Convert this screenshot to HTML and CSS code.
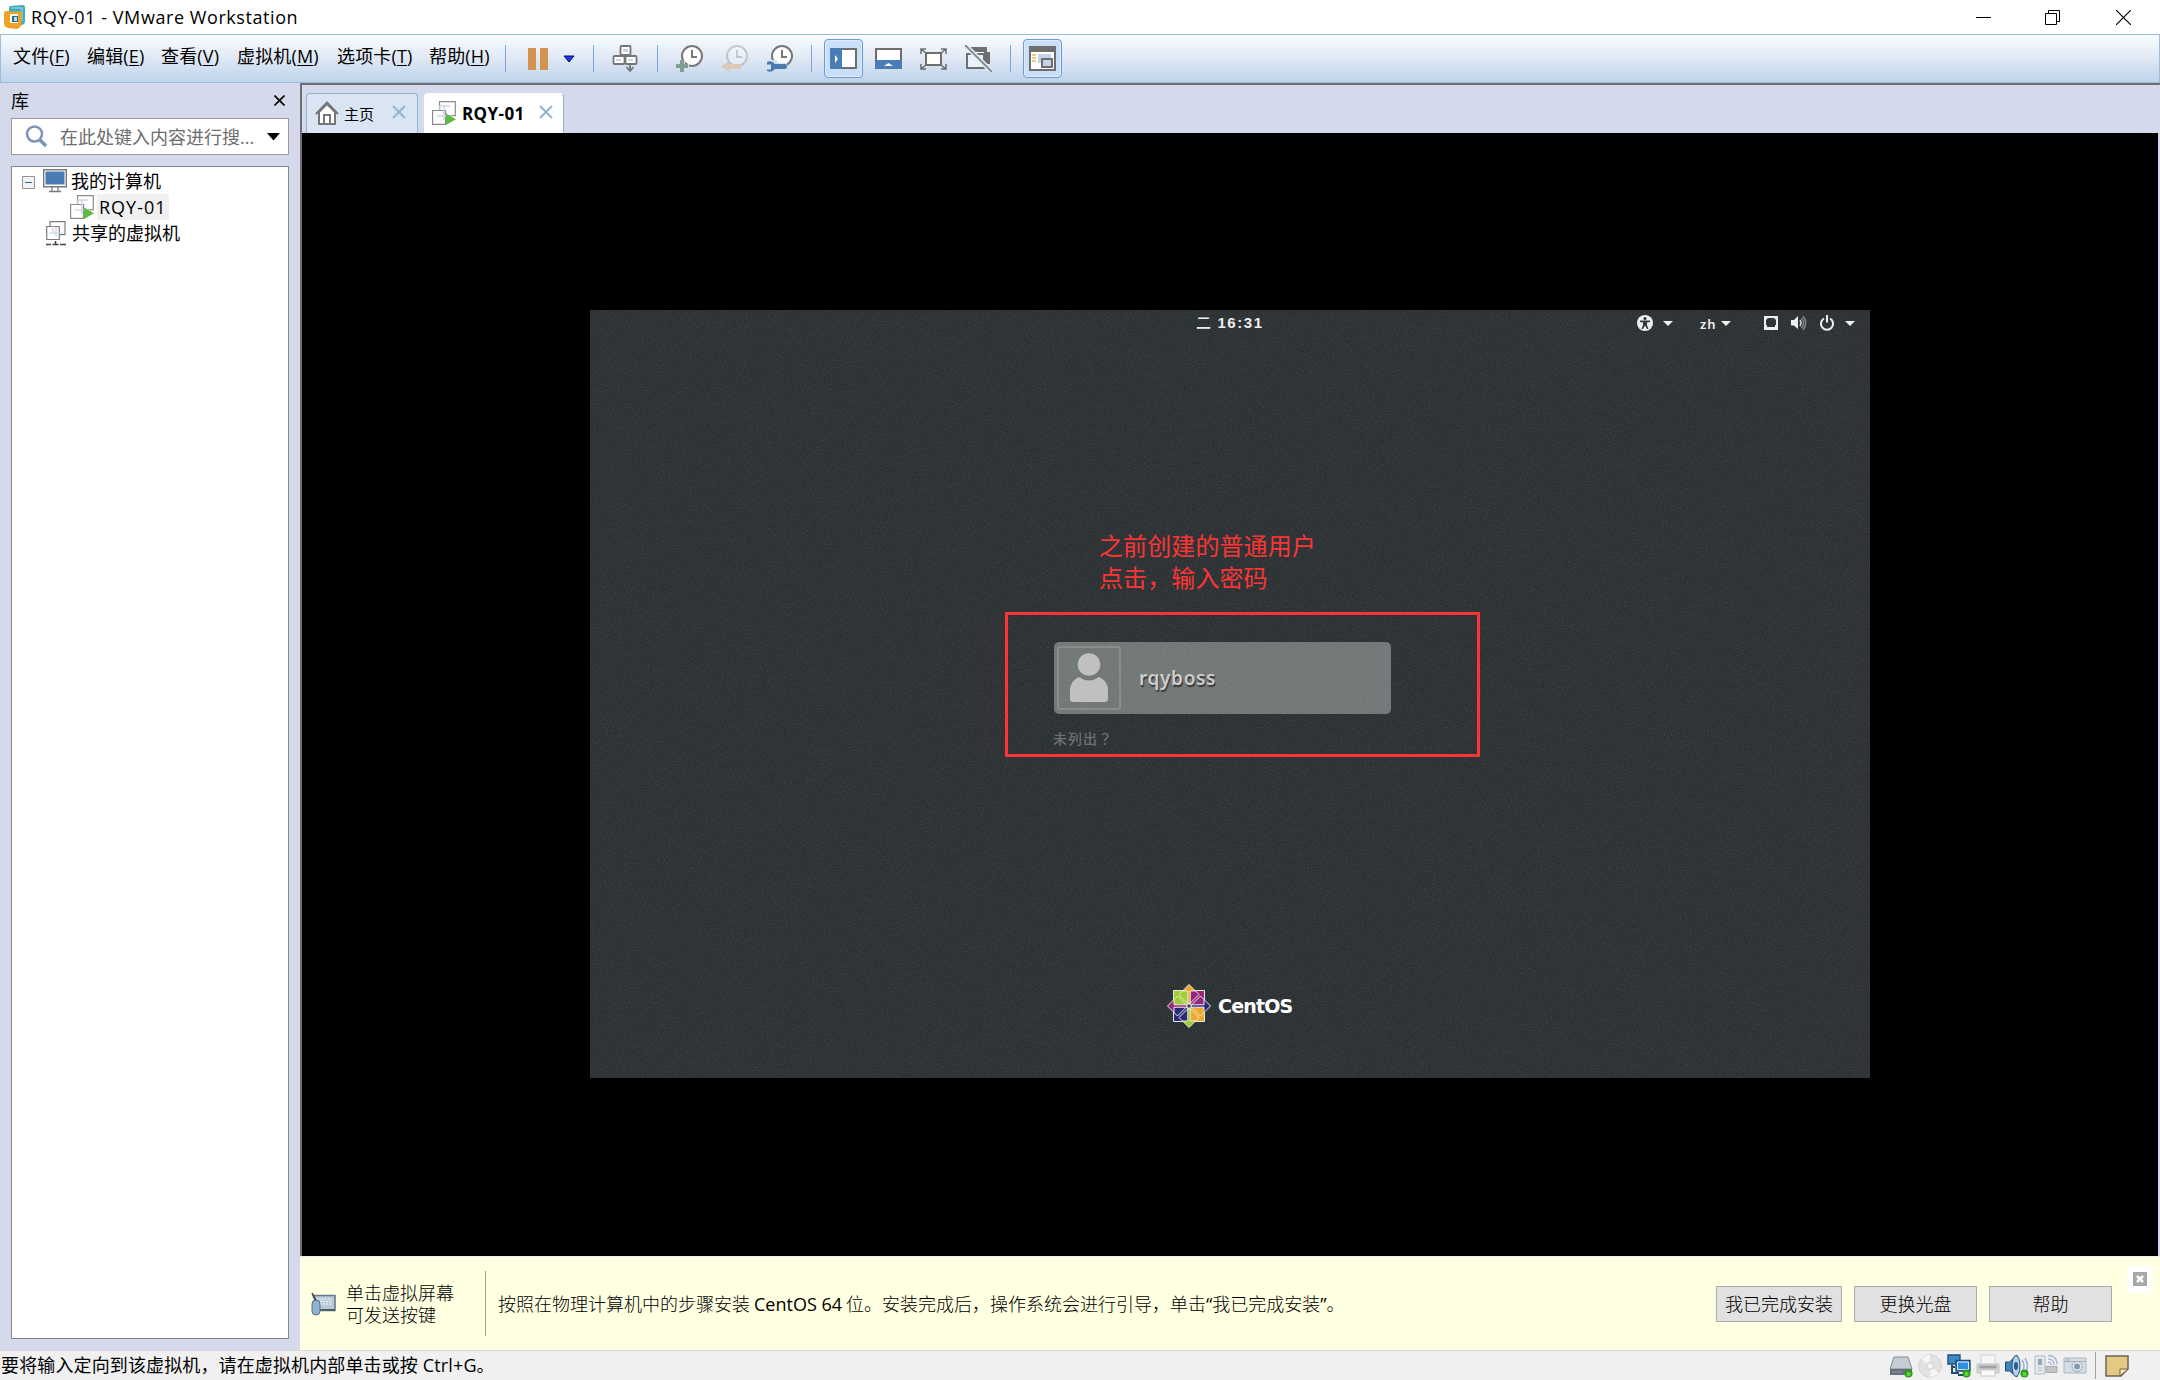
FILE: index.html
```html
<!DOCTYPE html>
<html lang="zh-CN">

<head>
    <meta charset="UTF-8">
    <meta name="viewport" content="width=device-width, initial-scale=1.0">
    <title>RQY-01 - VMware Workstation</title>
    <link rel="stylesheet" href="styles.css">
</head>

<body>
    <!-- 共用圖示 -->
    <svg class="defs" width="0" height="0">
        <defs>
            <symbol id="vm-on" viewBox="0 0 24 24">
                <path d="M7.500.6h15.800v14H7.500z" fill="#fff" stroke="#8c8c8c" stroke-width="1.200" />
                <path d="M.6 9.500h13v13.800H.6z" fill="#fff" stroke="#8c8c8c" stroke-width="1.200" />
                <path d="M12 5v14M5 15h15M8 9V5h10" fill="none" stroke="#cdd7e8" stroke-width="1.500" />
                <path d="M14 12.500l10 5.700-10 5.800z" fill="#5dbb3f" />
            </symbol>
            <symbol id="clock" viewBox="0 0 27 27">
                <circle cx="16" cy="11" r="10" fill="#fff" stroke="#777" stroke-width="2" />
                <path d="M16 5v7h5" fill="none" stroke="#777" stroke-width="2" />
            </symbol>
            <symbol id="cross" viewBox="0 0 14 14">
                <path d="M1 1l12 12M13 1L1 13" fill="none" stroke="currentColor" stroke-width="2" />
            </symbol>
            <symbol id="dot" viewBox="0 0 10 10">
                <circle cx="5" cy="5" r="4.500" fill="#2e9a1c" />
                <circle cx="5" cy="5.500" r="2.500" fill="#5fd03c" />
            </symbol>
        </defs>
    </svg>

    <header class="titlebar">
        <svg class="app-icon" width="22" height="25" viewBox="0 0 22 25">
            <path d="M6 1l13-1q2 0 2 3v13q0 3-3 4l-4 1-9-4V3q0-2 1-2z" fill="#43a9bf" />
            <path d="M7 3h11v13" fill="none" stroke="#7fd0dc" stroke-width="1.500" />
            <path d="M3 6h2v12l9 1V9h3v10q0 4-4 5l-9-1q-4-1-4-5V8q0-2 3-2z" fill="#f0a224" />
            <path d="M5 8h11v11H5z" fill="none" stroke="#f0a224" stroke-width="3" />
            <path d="M6 9h8v9H6z" fill="#f7fafc" />
            <path d="M8 11h6v6H8z" fill="#1f6e8b" />
            <path d="M10 12h3v4h-3z" fill="#c9dde6" />
        </svg>
        <span class="app-title">RQY-01 - VMware Workstation</span>
        <div class="win-btns">
            <svg width="15" height="15"><path d="M0 7.500h15" stroke="#000" /></svg>
            <svg width="15" height="15" fill="none" stroke="#000"><path d="M.5 3.500h11v11H.5zM3.500 3.500v-3h11v11h-3" /></svg>
            <svg width="15" height="15"><path d="M0 0l15 15M15 0L0 15" stroke="#000" stroke-width="1.200" /></svg>
        </div>
    </header>

    <nav class="toolbar">
        <div class="menu">
            <span class="m-2">文件(<u>F</u>)</span>
            <span class="m-2">编辑(<u>E</u>)</span>
            <span class="m-v">查看(<u>V</u>)</span>
            <span class="m-3">虚拟机(<u>M</u>)</span>
            <span class="m-t">选项卡(<u>T</u>)</span>
            <span class="m-h">帮助(<u>H</u>)</span>
        </div>
        <i class="sep"></i>
        <div class="tools tight">
            <span class="tool"><svg width="20" height="22"><path d="M0 0h8v22H0zM12 0h8v22h-8z" fill="#d3924d" /></svg></span>
            <span class="drop"><svg width="12" height="8"><path d="M1 1h10L6 7z" fill="#1b35ff" stroke="#000c66" /></svg></span>
        </div>
        <i class="sep"></i>
        <span class="tool">
            <svg width="27" height="27" viewBox="0 0 27 27" fill="#fff" stroke="#777" stroke-width="1.800">
                <rect x="8.500" y="1" width="10" height="9" rx="1" />
                <rect x="1.500" y="11" width="11" height="8" rx="1" />
                <rect x="13.500" y="11" width="11" height="8" rx="1" />
                <path d="M11 4h5v3h-5zM4 14h5v2H4zM16 14h5v2h-5z" fill="#c8d5e8" stroke="none" />
                <path d="M18 18v7M14.500 22l3.500 4 3.500-4" fill="none" />
            </svg>
        </span>
        <i class="sep"></i>
        <div class="tools">
            <span class="tool">
                <svg width="27" height="27" viewBox="0 0 27 27">
                    <use href="#clock" />
                    <path d="M0 19h4v-4h5v4h4v5H0z" fill="#d9e4f1" />
                    <path d="M6 15v12M0 21h12" stroke="#7f9f91" stroke-width="4" />
                </svg>
            </span>
            <span class="tool">
                <svg width="27" height="27" viewBox="0 0 27 27">
                    <use href="#clock" opacity=".3" />
                    <path d="M0 21.500l8-5.500v3h12v5H8v3z" fill="#dec9b9" />
                </svg>
            </span>
            <span class="tool">
                <svg width="27" height="27" viewBox="0 0 27 27">
                    <use href="#clock" />
                    <path d="M1 15h9l3 3h8v7H10l-9 2z" fill="#d3e0ef" />
                    <path d="M1 17q5-2 8 2h11q2 2.500 0 5H9q-3 4-8 2v-1.500h4v-5H1z" fill="#4a7aae" />
                </svg>
            </span>
        </div>
        <i class="sep"></i>
        <div class="tools">
            <span class="tool active">
                <svg width="27" height="21">
                    <path d="M0 0h27v21H0z" fill="#4a7db5" />
                    <path d="M12 1h14v19H12z" fill="#fff" />
                    <path d="M12 1h14v19H12" fill="none" stroke="#6e6e6e" stroke-width="2" />
                    <path d="M5 7l3 4-3 4z" fill="#fff" />
                </svg>
            </span>
            <span class="tool">
                <svg width="27" height="21">
                    <path d="M1 1h25v12H1z" fill="#fff" stroke="#6e6e6e" stroke-width="2" />
                    <path d="M0 12h27v9H0z" fill="#4a7db5" />
                    <path d="M9 18l4.500-3 4.500 3z" fill="#fff" />
                </svg>
            </span>
            <span class="tool">
                <svg width="27" height="22" fill="none" stroke="#6e6e6e" stroke-width="2">
                    <path d="M6 5h15v12H6z" fill="#fff" />
                    <path d="M1 6V1h5M21 1h5v5M26 16v5h-5M6 21H1v-5M1 1l5 4M26 1l-5 4M1 21l5-4M26 21l-5-4" stroke-width="1.500" />
                </svg>
            </span>
            <span class="tool">
                <svg width="27" height="27">
                    <path d="M6 7V3h15v13h-3" fill="#fff" stroke="#6e6e6e" stroke-width="2" />
                    <path d="M6 2h16v5H6zM19 7h6v12h-6z" fill="#6e6e6e" />
                    <path d="M2 9h17v14H2z" fill="#e9f0f8" stroke="#6e6e6e" stroke-width="2" />
                    <path d="M0 0l27 27" stroke="#e2ebf5" stroke-width="5" />
                    <path d="M0 0l27 27" stroke="#7d868f" stroke-width="1.800" />
                </svg>
            </span>
        </div>
        <i class="sep"></i>
        <span class="tool active">
            <svg width="27" height="25">
                <path d="M1 1h25v23H1z" fill="#fff" stroke="#6e6e6e" stroke-width="2" />
                <path d="M1 1h25v5H1z" fill="#6e6e6e" />
                <path d="M3 9h4M3 12h4M3 15h4" stroke="#e3b955" stroke-width="1.500" />
                <path d="M9 8h13v9H9z" fill="#c5d3e6" />
                <path d="M13 13h10v8H13z" fill="#c5d3e6" stroke="#6e6e6e" stroke-width="2" />
            </svg>
        </span>
    </nav>

    <div class="workspace">
        <aside class="library">
            <div class="lib-head">
                <span>库</span>
                <svg width="11" height="11"><path d="M.5.5l10 10M10.500.5l-10 10" stroke="#000" stroke-width="1.600" /></svg>
            </div>
            <div class="search">
                <svg width="24" height="24" fill="none" stroke="#7d94ba">
                    <circle cx="9.500" cy="9" r="7.500" stroke-width="2.500" />
                    <path d="M15 15l6 6" stroke-width="3.500" />
                </svg>
                <span class="placeholder">在此处键入内容进行搜...</span>
                <svg width="13" height="8"><path d="M0 0h13L6.500 7.500z" /></svg>
            </div>
            <div class="tree">
                <div class="node root">
                    <svg class="fold" width="13" height="13">
                        <path d="M.5.5h12v12H.5z" fill="#f4f4f4" stroke="#919191" />
                        <path d="M3 6.500h7" stroke="#3b5bab" />
                    </svg>
                    <svg width="24" height="24">
                        <path d="M.7.700h22.600v17H.7z" fill="#fff" stroke="#7a7a7a" stroke-width="1.400" />
                        <path d="M2.500 2.500h19v13h-19z" fill="#4a7bb2" />
                        <path d="M9 18v4M15 18v4M6 22.500h12" stroke="#7a7a7a" stroke-width="1.300" />
                    </svg>
                    <span class="label">我的计算机</span>
                </div>
                <div class="node child">
                    <svg width="24" height="24"><use href="#vm-on" /></svg>
                    <span class="selected">RQY-01</span>
                </div>
                <div class="node shared">
                    <svg width="20" height="25" fill="none" stroke="#7d7d7d" stroke-width="1.200">
                        <path d="M4 .7h15v13H4z" fill="#fff" />
                        <path d="M.7 5.500h12.600v13H.7z" fill="#fff" />
                        <path d="M7 5v7h10M10 6v10M3 12h10" stroke="#c7d3e6" />
                        <path d="M9.500 20v4M0 23.500h5M6.500 23.500h6M14 23.500h6" stroke="#444" stroke-width="1.600" />
                    </svg>
                    <span class="label">共享的虚拟机</span>
                </div>
            </div>
        </aside>

        <main class="main">
            <div class="tabs">
                <div class="tab home">
                    <svg width="24" height="24" fill="none" stroke="#777" stroke-width="2">
                        <path d="M4 11v12h16V11L12 3z" fill="#fff" />
                        <path d="M1 13L12 1.500 23 13M9 22v-8h6v8" />
                    </svg>
                    <span>主页</span>
                    <svg class="tab-x" width="14" height="14"><use href="#cross" /></svg>
                </div>
                <div class="tab current">
                    <svg width="24" height="24"><use href="#vm-on" /></svg>
                    <span>RQY-01</span>
                    <svg class="tab-x" width="14" height="14"><use href="#cross" /></svg>
                </div>
            </div>

            <div class="console">
                <div class="guest">
                    <svg class="grain" width="1280" height="768">
                        <filter id="noise">
                            <feTurbulence type="fractalNoise" baseFrequency=".7" numOctaves="2" />
                            <feColorMatrix values="0 0 0 0 1  0 0 0 0 1  0 0 0 0 1  .6 0 0 0 -.22" />
                        </filter>
                        <rect width="1280" height="768" filter="url(#noise)" />
                    </svg>
                    <div class="panel">
                        <span class="time">二 <b>16:31</b></span>
                        <div class="indicators">
                            <svg width="16" height="16">
                                <circle cx="8" cy="8" r="8" fill="#eee" />
                                <circle cx="8" cy="3.500" r="1.600" fill="#2e3436" />
                                <path d="M3 5.500h10v1.500l-3 .5v2.500l1.500 4H10L8 10.500 6 14H4.500L6 10V7.500L3 7z" fill="#2e3436" />
                            </svg>
                            <svg class="caret" width="10" height="5"><path d="M0 0h10L5 5z" fill="#eee" /></svg>
                            <span class="lang">zh</span>
                            <svg class="caret-zh" width="10" height="5"><path d="M0 0h10L5 5z" fill="#eee" /></svg>
                            <svg class="net" width="14" height="14">
                                <path d="M1 1h12v12H1z" fill="none" stroke="#eee" stroke-width="2" />
                                <path d="M1 9h2v2h8V9h2v4H1zM1 1h4L1 5zM13 1H9l4 4z" fill="#eee" />
                            </svg>
                            <svg class="vol" width="16" height="14">
                                <path d="M0 4h3l4-4v13L3 9.500H0z" fill="#eee" />
                                <path d="M9 4q2 3 0 6" fill="none" stroke="#ccc" stroke-width="1.500" />
                                <path d="M10.500 2q4 5 0 10M12 0q5.500 7 0 14" fill="none" stroke="#7d8182" stroke-width="1.500" />
                            </svg>
                            <svg class="power" width="14" height="16" fill="none" stroke="#eee" stroke-width="2">
                                <path d="M4 3.500a6 6 0 1 0 6 0M7 0v7.500" />
                            </svg>
                            <svg class="caret-end" width="10" height="5"><path d="M0 0h10L5 5z" fill="#eee" /></svg>
                        </div>
                    </div>

                    <div class="login">
                        <div class="user">
                            <div class="avatar">
                                <svg width="38" height="50" fill="#bfbfbf">
                                    <circle cx="19" cy="11.500" r="11.300" />
                                    <path d="M9 24q10 7 20 0 9 4 9 13v9q0 3-3 3H3q-3 0-3-3v-9Q0 28 9 24z" />
                                </svg>
                            </div>
                            <span>rqyboss</span>
                        </div>
                        <div class="unlisted" lang="zh-TW">未列出？</div>
                    </div>

                    <div class="brand">
                        <svg width="44" height="44" viewBox="-22 -22 44 44">
                            <g stroke="#e8e8e8" stroke-width="1">
                                <path d="M-15.500-15.500H-.7V-.7h-14.800z" fill="#9ccd2a" />
                                <path d="M.7-15.500h14.800V-.7H.7z" fill="#932279" />
                                <path d="M-15.500.7H-.7v14.800h-14.800z" fill="#262577" />
                                <path d="M.7.700h14.800v14.800H.7z" fill="#efa724" />
                                <path d="M0-21.500l6.500 6.500H1.200V-2h-2.400v-13h-5.300z" fill="#efa724" />
                                <path d="M21.500 0L15 6.500V1.200H2v-2.400h13v-5.300z" fill="#262577" />
                                <path d="M0 21.500L-6.500 15h5.300V2h2.400v13h5.300z" fill="#9ccd2a" />
                                <path d="M-21.500 0l6.500-6.500v5.300h13v2.400h-13v5.300z" fill="#932279" />
                                <path d="M-6.500-15L-10-11.500-1.500-3M6.500-15l3.500 3.500L1.500-3M-6.500 15l-3.500-3.500L-1.500 3M6.500 15l3.500-3.500L1.500 3M-15-6.500l3.500-3.500L-3-1.500M-15 6.500l3.500 3.500L-3 1.500M15-6.500L11.500-10 3-1.500M15 6.500L11.500 10 3 1.500" fill="none" />
                                <path d="M-2-2h4v4h-4z" fill="#333a3c" />
                            </g>
                        </svg>
                        <span>CentOS</span>
                    </div>

                    <!-- 紅色標註 -->
                    <p class="note">之前创建的普通用户<br>点击，输入密码</p>
                    <div class="frame"></div>
                </div>
            </div>

            <div class="hint">
                <svg width="25" height="26">
                    <path d="M2 4.500h22v15H8z" fill="#b9c9d5" stroke="#67798a" stroke-width="1.600" />
                    <path d="M5 8h16M6 10.500h15M9 13h12" stroke="#f3f7fa" stroke-dasharray="2 1" />
                    <path d="M8 19h16" stroke="#4c5e6d" stroke-width="2" />
                    <rect x="1" y="9" width="8" height="15" rx="4" fill="#91b3cf" stroke="#53718c" />
                    <path d="M1 2l4 7" stroke="#444" stroke-width="1.500" />
                </svg>
                <div class="hint-key">单击虚拟屏幕<br>可发送按键</div>
                <div class="hint-text">按照在物理计算机中的步骤安装 <b>CentOS 64</b> 位。安装完成后，操作系统会进行引导，单击<b>“</b>我已完成安装<b>”</b>。</div>
                <button type="button" class="btn btn-done">我已完成安装</button>
                <button type="button" class="btn">更换光盘</button>
                <button type="button" class="btn">帮助</button>
                <div class="hint-close">
                    <svg width="14" height="14">
                        <path d="M0 0h14v14H0z" fill="#a8a8a8" />
                        <path d="M4 4l6 6M10 4l-6 6" stroke="#fff" stroke-width="2.500" />
                    </svg>
                </div>
            </div>
        </main>
    </div>

    <footer class="status">
        <span class="status-text">要将输入定向到该虚拟机，请在虚拟机内部单击或按 Ctrl+G。</span>
        <div class="devices">
            <svg width="24" height="24">
                <path d="M5 3h14l4 12H1z" fill="#c5ccd4" stroke="#818a95" />
                <path d="M1 15h22v6H1z" fill="#66717d" />
                <path d="M3 18h11" stroke="#8999a7" />
                <use href="#dot" x="15" y="15" width="9" height="9" />
            </svg>
            <svg width="24" height="24">
                <circle cx="12" cy="12" r="11.300" fill="#e2e2e2" stroke="#d0d0d0" />
                <path d="M12 12L3 5q4-4 9-4zM12 12l9 7q-4 4-9 4z" fill="#f5f5f5" />
                <circle cx="12" cy="12" r="3.500" fill="#f3f3f3" stroke="#ccc" />
            </svg>
            <svg width="24" height="24">
                <path d="M1 1h12v9H1z" fill="#3b8acb" stroke="#254c6d" stroke-width="1.400" />
                <path d="M5 11v8h7M4 13h4M11 21h8" fill="none" stroke="#254c6d" stroke-width="2" />
                <path d="M9 6.500h14v10.500H9z" fill="#2f8fe0" stroke="#254c6d" stroke-width="1.400" />
                <path d="M10.500 8h11v7.500h-11z" fill="none" stroke="#d5eaff" />
                <use href="#dot" x="15" y="15" width="9" height="9" />
            </svg>
            <svg width="24" height="24">
                <path d="M5 1h14v10H5z" fill="#f5f5f5" stroke="#d0d0d0" />
                <path d="M1 10h22v9H1z" fill="#d4d4d4" stroke="#c0c0c0" />
                <path d="M3 11.500h18v3H3z" fill="#a3a3a3" />
                <path d="M5 16h14v6H5z" fill="#fafafa" stroke="#cacaca" />
            </svg>
            <svg width="24" height="24">
                <path d="M.5 8h4L12 1v22l-7.500-6h-4z" fill="#4283b8" stroke="#234b72" />
                <ellipse cx="11" cy="12" rx="4" ry="10.500" fill="#b3d1e8" stroke="#22547f" />
                <ellipse cx="11" cy="12" rx="2" ry="4" fill="#2b5c87" />
                <path d="M17 6q4 6 0 12M20 4q5 8 0 16" fill="none" stroke="#9bb0d5" stroke-width="1.500" />
                <use href="#dot" x="15" y="15" width="9" height="9" />
            </svg>
            <svg width="24" height="24">
                <path d="M1 2h10v18H1z" fill="#e4e8ec" stroke="#b3bbc2" />
                <path d="M4 5h4v6H4z" fill="#91a8bd" />
                <path d="M4 14h4M4 16.500h4" stroke="#b3bbc2" />
                <path d="M12 12.500h11v6H12z" fill="#c0c5c9" stroke="#aaa" />
                <path d="M14 8q3 0 3 3M14 5q6 0 6 6M14 1.500q9 0 9 9" fill="none" stroke="#abb9da" stroke-width="1.500" />
            </svg>
            <svg width="24" height="24">
                <path d="M1 4h22v15H1z" fill="#d6dde2" stroke="#aab6bf" />
                <path d="M1 7.500h22M3 6h4" stroke="#a4b1bb" />
                <circle cx="14" cy="12.500" r="5" fill="#e8eef2" stroke="#9aa9b6" />
                <circle cx="14" cy="12.500" r="3" fill="#7f9aba" />
            </svg>
            <i class="dev-sep"></i>
            <svg width="24" height="22">
                <path d="M1 1h22v13l-7 7H1z" fill="#e4c984" stroke="#6e6654" stroke-width="1.500" />
                <path d="M15 21v-7h8z" fill="#fbe7a9" stroke="#6e6654" />
            </svg>
        </div>
    </footer>
</body>

</html>
```
FILE: styles.css
```css
* {
    box-sizing: border-box;
}

body {
    margin: 0;
    width: 2160px;
    height: 1380px;
    display: flex;
    flex-direction: column;
    overflow: hidden;
    background-color: #fff;
    font-family: "Open Sans", "Noto Sans CJK SC", sans-serif;
    font-size: 18px;
    color: #000;
    white-space: nowrap;
}

svg {
    display: block;
    flex-shrink: 0;
}

.defs {
    position: absolute;
}

/* 標題列 */
.titlebar {
    height: 34px;
    display: flex;
    align-items: center;
    padding-left: 4px;
}

.app-title {
    margin-left: 5px;
    padding-bottom: 1px;
    letter-spacing: 0.57px;
}

.win-btns {
    display: flex;
    gap: 55px;
    margin-left: auto;
    padding-right: 29px;
}

.win-btns svg:nth-child(2) {
    margin: 0 1px 0 -1px;
}

/* 工具列 */
.toolbar {
    height: 49px;
    display: flex;
    align-items: center;
    padding-left: 12px;
    border: 1px solid #9cbce0;
    background: linear-gradient(#fafcff, #dfe8f4 50%, #bfd3eb);
}

.menu {
    display: flex;
    line-height: 26px;
    margin-top: -6px;
    letter-spacing: 0.15px;
}

.menu u {
    text-underline-offset: 2px;
    text-decoration-thickness: 1px;
}

.m-2 {
    width: 74px;
}

.m-v {
    width: 76px;
}

.m-3 {
    width: 100px;
}

.m-t {
    width: 92px;
}

.m-h {
    width: 64px;
}

.sep {
    width: 1px;
    height: 27px;
    margin: 0 12px;
    background-color: #7da4d4;
}

.tools {
    display: flex;
    gap: 6px;
}

.tight {
    gap: 0;
}

.tool,
.drop {
    width: 39px;
    height: 39px;
    display: flex;
    justify-content: center;
    align-items: center;
}

.drop {
    width: 24px;
}

.active {
    border: 1px solid #6f9bd1;
    border-radius: 4px;
    background-color: #c9dffa;
    box-shadow: inset 0 0 0 1px #dcebfd;
}

/* 中間區域 */
.workspace {
    height: 1267px;
    display: flex;
    background-color: #d4d9ec;
}

.library {
    width: 300px;
    padding: 6px 11px 11px;
    display: flex;
    flex-direction: column;
}

.lib-head {
    height: 29px;
    display: flex;
    justify-content: space-between;
    align-items: center;
    padding-right: 4px;
    padding-bottom: 6px;
}

.lib-head span {
    padding-bottom: 2px;
}

.search {
    width: 278px;
    height: 37px;
    display: flex;
    align-items: center;
    padding-left: 13px;
    border: 1px solid #9c9c9c;
    background-color: #fff;
}

.placeholder {
    width: 207px;
    margin-left: 11px;
    padding-bottom: 2px;
    color: #6d6d6d;
}

.tree {
    width: 278px;
    height: 1173px;
    margin-top: 11px;
    padding-top: 1px;
    border: 1px solid #828790;
    background-color: #fff;
}

.node {
    height: 26px;
    display: flex;
    align-items: center;
}

.label {
    padding-bottom: 2px;
}

.root {
    padding-left: 10px;
    gap: 4px;
}

.fold {
    margin-top: 3px;
    margin-right: 4px;
}

.child {
    padding-left: 58px;
    gap: 3px;
}

.selected {
    width: 72px;
    height: 26px;
    padding-left: 2px;
    line-height: 26px;
    letter-spacing: 1px;
    background-color: #f0f0f0;
}

.shared {
    padding-left: 34px;
    gap: 6px;
}

.main {
    width: 1860px;
    display: flex;
    flex-direction: column;
}

.tabs {
    height: 50px;
    display: flex;
    align-items: flex-end;
    gap: 6px;
    padding-left: 4px;
    border-top: 2px solid #6f6f73;
    border-left: 2px solid #6f6f73;
}

.tab {
    height: 40px;
    display: flex;
    align-items: center;
    border: 1px solid #8fb2cf;
    border-bottom: none;
    border-radius: 4px 4px 0 0;
    font-size: 15px;
}

.home {
    width: 112px;
    padding-left: 8px;
    background-color: #dae5f4;
}

.home svg:first-child {
    margin-top: -2px;
}

.home span {
    width: 48px;
    margin-left: 5px;
}

.current {
    width: 140px;
    padding-left: 7px;
    border-color: #fff #8fb2cf #fff #fff;
    background-color: #fff;
}

.current span {
    width: 77px;
    margin-left: 6px;
    font-size: 17px;
    font-weight: 700;
    letter-spacing: 0.4px;
}

.current svg:first-child {
    margin-top: -2px;
}

.tab .tab-x {
    color: #92b4d1;
    margin-top: -3px;
}

.console {
    height: 1123px;
    width: 1858px;
    padding: 177px 0 0 288px;
    border-left: 2px solid #6f6f73;
    background-color: #000;
}

/* CentOS 登入畫面 */
.guest {
    position: relative;
    width: 1280px;
    height: 768px;
    display: flex;
    flex-direction: column;
    background-color: #2b3133;
    color: #eee;
}

.grain {
    position: absolute;
    opacity: 0.25;
}

.panel {
    height: 26px;
    display: grid;
    grid-template-columns: 606px 1fr;
    align-items: center;
    font-family: "Noto Sans CJK SC", sans-serif;
}

.time {
    grid-column: 2;
    grid-row: 1;
    padding-bottom: 1px;
    font-size: 15px;
    line-height: 20px;
    font-weight: 500;
}

.time b {
    font-family: "Liberation Sans", sans-serif;
    font-weight: 700;
    letter-spacing: 1.6px;
    margin-left: 3px;
}

.indicators {
    grid-column: 2;
    grid-row: 1;
    display: flex;
    align-items: center;
    padding-left: 441px;
}

.caret {
    margin-left: 10px;
}

.lang {
    width: 21px;
    margin-left: 27px;
    padding-top: 2px;
    font-family: "Noto Sans", sans-serif;
    font-size: 13px;
    line-height: 18px;
    font-weight: 600;
    letter-spacing: 1px;
}

.net {
    margin-left: 33px;
}

.vol {
    margin-left: 13px;
}

.power {
    margin-left: 13px;
}

.caret-end {
    margin-left: 11px;
}

.login {
    margin: 306px 0 0 464px;
}

.user {
    width: 337px;
    height: 72px;
    display: flex;
    align-items: center;
    padding-left: 3px;
    border-radius: 5px;
    background-color: #717677;
    font-family: "Noto Sans", sans-serif;
    font-size: 19px;
    font-weight: 600;
    letter-spacing: 0.65px;
    color: #ccc;
    text-shadow: 1px 2px 1px #333;
}

.avatar {
    width: 64px;
    height: 64px;
    display: flex;
    justify-content: center;
    align-items: center;
    margin-right: 18px;
    border: 2px solid #8a8a8b;
    border-radius: 3px;
}

.unlisted {
    margin: 13px 0 0 -1px;
    font-family: "Noto Sans CJK TC", sans-serif;
    font-size: 14px;
    line-height: 22px;
    letter-spacing: 1px;
    font-weight: 500;
    color: #696d6e;
}

.brand {
    display: flex;
    align-items: center;
    margin: 235px 0 0 577px;
    font-family: "DejaVu Sans", sans-serif;
    font-size: 19px;
    font-weight: 700;
    letter-spacing: -0.8px;
    color: #fff;
}

.brand span {
    margin-left: 7px;
}

.note {
    position: absolute;
    left: 509px;
    top: 219px;
    margin: 0;
    font-family: "Noto Sans CJK SC", sans-serif;
    font-size: 24px;
    line-height: 32px;
    letter-spacing: 0.1px;
    color: #fe3434;
}

.frame {
    position: absolute;
    left: 415px;
    top: 302px;
    width: 475px;
    height: 145px;
    border: 3px solid #fe3434;
}

/* 底部提示 */
.hint {
    height: 94px;
    display: flex;
    align-items: center;
    padding-left: 11px;
    border-top: 1px solid #f0f0f0;
    background-color: #ffffe1;
    font-family: "Noto Sans CJK SC", sans-serif;
    font-weight: 300;
}

.hint-key {
    width: 140px;
    height: 65px;
    margin-left: 10px;
    padding-top: 10px;
    line-height: 22px;
    border-right: 1px solid #a0a0a0;
}

.hint-text {
    width: 1218px;
    margin-left: 12px;
    padding-bottom: 2px;
}

.hint-text b {
    font-family: "Open Sans", sans-serif;
    font-weight: 500;
    letter-spacing: 0;
}

.btn {
    width: 123px;
    height: 36px;
    margin-right: 12px;
    padding: 0 0 2px;
    border: 1px solid #adadad;
    background-color: #e1e1e1;
    font-family: "Noto Sans CJK SC", sans-serif;
    font-size: 18px;
    font-weight: 300;
}

.btn-done {
    width: 126px;
}

.hint-close {
    width: 25px;
    height: 27px;
    display: flex;
    justify-content: center;
    align-items: center;
    margin: 0 0 49px 3px;
    background-color: #fff;
}

/* 狀態列 */
.status {
    height: 30px;
    display: flex;
    justify-content: space-between;
    align-items: center;
    padding: 0 31px 0 1px;
    border-top: 1px solid #d7d7d7;
    background-color: #f0f0f0;
}

.status-text {
    padding-bottom: 3px;
    letter-spacing: 0.13px;
}

.devices {
    display: flex;
    align-items: center;
    gap: 5px;
}

.dev-sep {
    width: 1px;
    height: 27px;
    margin: 0 4px 0 3px;
    background-color: #a0a0a0;
}
```
